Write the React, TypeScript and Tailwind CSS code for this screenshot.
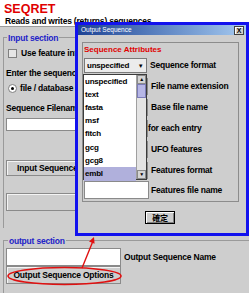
const formats = ["unspecified", "text", "fasta", "msf", "fitch", "gcg", "gcg8", "embl"]

function Field({ className = "" }: { className?: string }) {
  return <div className={`bg-white border border-[#8a8a8a] ${className}`} />
}

function GrayButton({ className = "", children }: { className?: string; children?: React.ReactNode }) {
  return (
    <div className={`bg-[#cecece] border border-[#8a8a8a] shadow-[inset_1px_1px_0_#f4f4f4] flex items-center ${className}`}>
      {children}
    </div>
  )
}

export default function App() {
  return (
    <div className="relative w-[249px] h-[293px] overflow-hidden bg-[#cecece] font-['Liberation_Sans',Arial,sans-serif] font-bold text-[8.5px] tracking-[-0.2px] leading-none text-black">
      {/* header */}
      <div className="h-[27px] bg-white pl-[4px] pt-[3px] border-b border-[#9a9a9a]">
        <div className="text-[12.5px] tracking-normal leading-[12px] text-[#e00000]">SEQRET</div>
        <div className="mt-[2px] pl-px leading-[9px]">Reads and writes (returns) sequences</div>
      </div>

      {/* input section (right part sits under the dialog) */}
      <div className="mt-[10px] ml-[3px] w-[73px] h-[191px] overflow-x-clip border-l border-t border-[#9a9a9a]">
        <div className="-mt-[5px] ml-[3px] w-fit px-px bg-[#cecece] leading-[10px] text-[#2222c8]">Input section</div>
        <div className="mt-[6px] ml-[4px] flex items-center h-[9px]">
          <div className="shrink-0 w-[9px] h-[9px] bg-[#e6e6e6] border border-[#808080]" />
          <span className="ml-[4px] whitespace-nowrap">Use feature information</span>
        </div>
        <div className="mt-[11px] ml-[2px] leading-[9px] whitespace-nowrap">Enter the sequence details</div>
        <div className="mt-[6px] ml-[4px] flex items-center h-[9px]">
          <div className="shrink-0 w-[9px] h-[9px] rounded-full bg-white border border-[#808080] flex items-center justify-center">
            <div className="w-[3px] h-[3px] rounded-full bg-black" />
          </div>
          <span className="ml-[3px] whitespace-nowrap">file / database entry</span>
        </div>
        <div className="mt-[11px] ml-[2px] leading-[9px] whitespace-nowrap">Sequence Filename</div>
        <Field className="mt-[5px] ml-[2px] w-[120px] h-[13px]" />
        <GrayButton className="mt-[29px] ml-[2px] w-[120px] h-[16px] pl-[10px]">
          <span className="whitespace-nowrap">Input Sequence Options</span>
        </GrayButton>
        <GrayButton className="mt-[17px] ml-[2px] w-[120px] h-[18px]" />
      </div>

      {/* output section */}
      <div className="mt-[12px] ml-[3px] h-[60px] border-l border-t border-[#9a9a9a]">
        <div className="-mt-[5px] ml-[4px] w-fit px-px bg-[#cecece] leading-[10px] text-[#2222c8]">output section</div>
        <div className="mt-[2px] ml-[2px] flex items-center">
          <Field className="w-[115px] h-[18px]" />
          <span className="ml-[3px] whitespace-nowrap">Output Sequence Name</span>
        </div>
        <GrayButton className="ml-[2px] w-[115px] h-[18px] justify-center">
          <span className="whitespace-nowrap">Output Sequence Options</span>
        </GrayButton>
      </div>

      {/* dialog window */}
      <div className="absolute left-[75px] top-[22px] w-[174px] h-[214px] border-[3px] border-[#1212ee] bg-[#cecece]">
        <div className="h-[10px] flex items-center justify-between bg-gradient-to-r from-[#1e4294] to-[#a6caf0]">
          <span className="pl-[3px] text-[6.5px] tracking-normal font-normal text-white whitespace-nowrap">Output Sequence</span>
          <div className="mr-[2px] w-[10px] h-[9px] bg-[#d4d0c8] border border-[#404040] shadow-[inset_1px_1px_0_#fff] flex items-center justify-center text-[7px] font-black leading-none">
            X
          </div>
        </div>

        <div className="mt-[7px] ml-[4px] w-[157px] border border-[#8c8c8c]">
          <div className="pt-[2px] pl-[1px] leading-[10px] text-[8px] tracking-normal text-[#e00000] whitespace-nowrap">Sequence Attributes</div>

          <div className="h-[21px] flex items-center pl-[1px]">
            <div className="w-[63px] h-[15px] bg-[#ececec] border border-[#7a7a7a] flex items-center">
              <span className="pl-[2px] flex-1 text-[8px]">unspecified</span>
              <div className="w-[11px] h-full flex items-center justify-center text-[6px]">▼</div>
            </div>
            <span className="ml-[3px] whitespace-nowrap">Sequence format</span>
          </div>
          {["File name extension", "Base file name", "for each entry", "UFO features", "Features format"].map((label, i) => (
            <div key={label} className="h-[21px] flex items-center pl-[1px]">
              <Field className="w-[64px] h-[17px]" />
              <span className={`${i === 2 ? "ml-0" : "ml-[3px]"} whitespace-nowrap`}>{label}</span>
            </div>
          ))}
          <div className="h-[20px] flex items-start pl-[1px]">
            <Field className="w-[65px] h-[18px]" />
            <span className="ml-[2px] mt-[5px] whitespace-nowrap">Features file name</span>
          </div>
        </div>

        <div className="mt-[9px] ml-[67px] w-[30px] h-[13px] border border-black bg-[#cecece] shadow-[inset_1px_1px_0_#fff,inset_-1px_-1px_0_#808080] flex items-center justify-center font-['Noto_Sans_CJK_TC',sans-serif] text-[8px]">
          確定
        </div>

        {/* open combo list */}
        <div className="absolute left-[5px] top-[49px] w-[64px] h-[106px] border border-[#3c3c3c] bg-white flex">
          <div className="flex-1">
            {formats.map((f) => (
              <div key={f} className={`h-[13.2px] flex items-center pl-[1px] text-[8px] ${f === "embl" ? "bg-[#b0b0dc]" : ""}`}>
                {f}
              </div>
            ))}
          </div>
          <div className="w-[10px] flex flex-col bg-[#e4e4e4] border-l border-[#a0a0a0]">
            <div className="h-[9px] bg-[#d4d4d4] border border-[#8a8a8a] flex items-center justify-center text-[5px]">▲</div>
            <div className="h-[14px] bg-[#b6b6e6] border border-[#7c7cb8]" />
            <div className="flex-1" />
            <div className="h-[9px] bg-[#d4d4d4] border border-[#8a8a8a] flex items-center justify-center text-[5px]">▼</div>
          </div>
        </div>
      </div>

      {/* red annotation */}
      <svg className="absolute inset-0 pointer-events-none" width="249" height="293" viewBox="0 0 249 293">
        <ellipse cx="64.5" cy="276" rx="56.5" ry="8.5" fill="none" stroke="#e01010" strokeWidth="1.6" />
        <line x1="82" y1="268" x2="93" y2="241" stroke="#e01010" strokeWidth="1.4" />
        <polygon points="94,237 94.6,243.7 89,241.5" fill="#e01010" />
      </svg>
    </div>
  )
}
